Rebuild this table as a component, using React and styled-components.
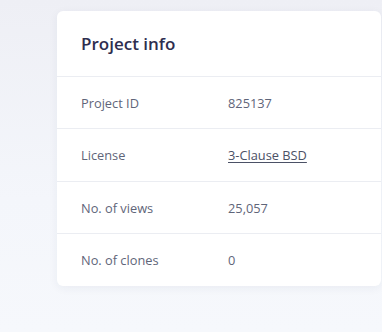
import styled, { createGlobalStyle } from 'styled-components';

const GlobalStyle = createGlobalStyle`
  html, body {
    margin: 0;
    padding: 0;
  }
  body {
    font-family: "Open Sans", "Liberation Sans", sans-serif;
    background: linear-gradient(180deg, #eeeff5 0%, #f4f6fb 60%, #f6f8fc 100%);
    width: 382px;
    height: 332px;
    overflow: hidden;
  }
`;

const Page = styled.div`
  padding: 11px 0 0 57px;
  height: 332px;
  box-sizing: border-box;
`;

const Card = styled.div`
  width: 324px;
  background-color: #ffffff;
  border-radius: 6px;
  box-shadow: 0 2px 10px rgba(40, 50, 90, 0.06);
  overflow: hidden;
`;

const Header = styled.div`
  height: 66px;
  display: flex;
  align-items: center;
  padding: 0 24px;
  border-bottom: 1px solid #ebedf2;
  box-sizing: border-box;
`;

const Title = styled.h2`
  margin: 0;
  font-size: 17px;
  font-weight: 600;
  color: #2e2e4f;
`;

const Row = styled.div`
  height: ${(p) => p.height || 52}px;
  display: flex;
  align-items: center;
  padding: 0 24px;
  border-bottom: ${(p) => (p.last ? 'none' : '1px solid #ebedf2')};
  box-sizing: border-box;
  font-size: 12.8px;
  color: #5f6579;
`;

const Label = styled.span`
  width: 147px;
  flex-shrink: 0;
`;

const Value = styled.span``;

const Link = styled.a`
  color: #4b5166;
  text-decoration: underline;
  text-underline-offset: 2px;
`;

export default function App() {
  return (
    <>
      <GlobalStyle />
      <Page>
        <Card>
          <Header>
            <Title>Project info</Title>
          </Header>
          <Row height={52}>
            <Label>Project ID</Label>
            <Value>825137</Value>
          </Row>
          <Row height={53}>
            <Label>License</Label>
            <Value><Link>3-Clause BSD</Link></Value>
          </Row>
          <Row height={52}>
            <Label>No. of views</Label>
            <Value>25,057</Value>
          </Row>
          <Row height={52} last>
            <Label>No. of clones</Label>
            <Value>0</Value>
          </Row>
        </Card>
      </Page>
    </>
  );
}
